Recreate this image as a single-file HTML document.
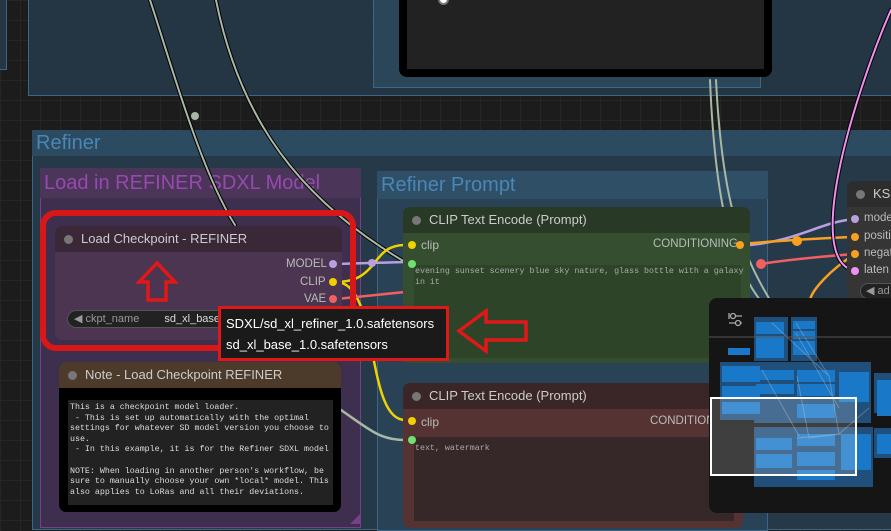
<!DOCTYPE html>
<html><head><meta charset="utf-8"><style>
*{margin:0;padding:0;box-sizing:border-box}
body{width:891px;height:524px;overflow:hidden;position:relative;font-family:"Liberation Sans",sans-serif;
background-color:#1c1c1c;background-image:linear-gradient(#262626 1px,transparent 1px),linear-gradient(90deg,#262626 1px,transparent 1px);background-size:20px 20px}
.a{position:absolute}
.grp{position:absolute;border:1px solid #3d6686}
.gt{font-size:20px;padding-left:4px;line-height:26px}
.node{position:absolute;border-radius:7px;overflow:hidden}
.nt{height:26px;font-size:13px;color:#ccc;line-height:26px;padding-left:26px;position:relative}
.nt:before{content:"";position:absolute;left:9px;top:9px;width:9px;height:9px;border-radius:50%;background:#777}
.dot{position:absolute;width:8px;height:8px;border-radius:50%}
.lbl{position:absolute;font-size:11.5px;color:#bbb}
.mono{font-family:"Liberation Mono",monospace;font-size:8.3px;color:#ddd;line-height:10.6px;white-space:pre}
</style></head><body>
<div class="grp" style="left:-10px;top:-2px;width:17px;height:72px;background:#253541"></div>
<div class="grp" style="left:28px;top:-2px;width:880px;height:98px;background:rgba(38,57,74,0.85)"></div>
<div class="grp" style="left:373px;top:-2px;width:388px;height:90px;background:#2b4559"></div>
<div class="a" style="left:399px;top:-10px;width:373px;height:87px;background:#222;border:8px solid #000;border-radius:8px"></div>
<div class="a" style="left:438px;top:-6px;width:11px;height:11px;border-radius:50%;background:#fff;border:2px solid #777"></div>

<div class="grp" style="left:32px;top:130px;width:870px;height:400px;background:#253949"></div>
<div class="a" style="left:32px;top:130px;width:870px;height:26px;background:#2c4a60"></div>
<div class="a gt" style="left:32px;top:130px;color:#4a86b6">Refiner</div>

<div class="grp" style="left:40px;top:168px;width:321px;height:360px;background:#3d2f4d;border-color:#7a3f8a"></div>
<div class="a" style="left:40px;top:168px;width:321px;height:30px;background:#4b3659"></div>
<div class="a gt" style="left:40px;top:170px;color:#9848b0">Load in REFINER SDXL Model</div>
<div class="a" style="left:350px;top:514px;width:0;height:0;border-left:10px solid transparent;border-bottom:10px solid #7a3f8a"></div>

<div class="grp" style="left:377px;top:171px;width:391px;height:360px;background:#2a4256"></div>
<div class="a" style="left:377px;top:171px;width:391px;height:28px;background:#2f4f66"></div>
<div class="a gt" style="left:377px;top:172px;color:#4a86b6">Refiner Prompt</div>

<svg class="a" style="left:0;top:0" width="891" height="524">
<g fill="none" stroke-linecap="round">
<path d="M150 0 C170 60 200 170 235 225" stroke="#000" stroke-width="4"/>
<path d="M150 0 C170 60 200 170 235 225" stroke="#a8b8a4" stroke-width="2"/>
<path d="M216 0 C240 120 300 200 405 262" stroke="#000" stroke-width="4"/>
<path d="M216 0 C240 120 300 200 405 262" stroke="#a8b8a4" stroke-width="2"/>
<path d="M710 80 C715 200 730 260 760 300" stroke="#a8b8a4" stroke-width="2"/>
<path d="M716 80 C722 200 740 250 770 300" stroke="#a8b8a4" stroke-width="2"/>
<path d="M341 410 C370 430 380 440 405 440" stroke="#a8b8a4" stroke-width="2.5"/>
<path d="M336 264 L405 262" stroke="#b8a0e0" stroke-width="2.5"/>
<path d="M750 245 C800 240 820 222 855 219" stroke="#b8a0e0" stroke-width="2.5"/>
<path d="M336 282 C380 282 370 245 405 245" stroke="#f0d000" stroke-width="2.5"/>
<path d="M336 282 C380 282 365 420 405 420" stroke="#f0d000" stroke-width="2.5"/>
<path d="M336 299 L405 292" stroke="#f06060" stroke-width="2.5"/>
<path d="M740 244 C790 240 820 238 855 237" stroke="#f8a020" stroke-width="2.5"/>
<path d="M760 264 C800 258 830 256 855 254" stroke="#f06060" stroke-width="2.5"/>
<path d="M855 254 C830 270 812 290 810 300" stroke="#f8a020" stroke-width="2.5"/>
<path d="M891 10 C860 80 800 260 855 271" stroke="#000" stroke-width="4"/>
<path d="M891 10 C860 80 800 260 855 271" stroke="#f090f0" stroke-width="2"/>
<circle cx="195" cy="116" r="4" fill="#a8b8a4"/>
<circle cx="797" cy="241" r="5" fill="#f8a020"/>
<circle cx="761" cy="264" r="5" fill="#f06060"/>
<circle cx="372" cy="263" r="4" fill="#b8a0e0"/>
</g></svg>

<div class="node" style="left:55px;top:226px;width:287px;height:114px;background:#4b3550">
<div class="nt" style="background:#3a2838">Load Checkpoint - REFINER</div>
</div>
<div class="lbl" style="left:286px;top:258px">MODEL</div>
<div class="lbl" style="left:300px;top:276px">CLIP</div>
<div class="lbl" style="left:304px;top:293px">VAE</div>
<div class="dot" style="left:329px;top:260px;background:#b8a0e0"></div>
<div class="dot" style="left:329px;top:278px;background:#f0d000"></div>
<div class="dot" style="left:329px;top:295px;background:#f06060"></div>
<div class="a" style="left:67px;top:310px;width:180px;height:18px;border-radius:9px;background:#222;border:1px solid #555;font-size:11px;color:#999;line-height:16px;padding-left:6px">◀ ckpt_name <span style="color:#ddd;margin-left:22px">sd_xl_base_</span></div>
<svg class="a" style="left:136px;top:260px" width="44" height="44"><path d="M21 3 L39 22 L30 22 L30 40 L12 40 L12 22 L3 22 Z" fill="none" stroke="#e01818" stroke-width="3.5"/></svg>
<div class="a" style="left:40px;top:210px;width:316px;height:141px;border:6px solid #d81818;border-radius:16px"></div>

<div class="node" style="left:59px;top:362px;width:282px;height:150px;background:#000">
<div class="nt" style="background:#4c3b2a">Note - Load Checkpoint REFINER</div>
<div class="a mono" style="left:9px;top:38px;width:265px;height:105px;background:#222;padding:3px 2px">This is a checkpoint model loader.
 - This is set up automatically with the optimal
settings for whatever SD model version you choose to
use.
 - In this example, it is for the Refiner SDXL model

NOTE: When loading in another person's workflow, be
sure to manually choose your own *local* model. This
also applies to LoRas and all their deviations.</div>
</div>

<div class="node" style="left:403px;top:207px;width:347px;height:156px;background:#354e30">
<div class="nt" style="background:#283a26">CLIP Text Encode (Prompt)</div>
<div class="a" style="left:11px;top:58px;width:327px;height:93px;background:#2e4429"></div>
<div class="a mono" style="left:12px;top:60px;color:#aaa">evening sunset scenery blue sky nature, glass bottle with a galaxy
in it</div>
</div>
<div class="dot" style="left:408px;top:241px;background:#f0d000"></div>
<div class="lbl" style="left:421px;top:238px;font-size:12px">clip</div>
<div class="lbl" style="left:653px;top:238px">CONDITIONING</div>
<div class="dot" style="left:736px;top:241px;background:#f8a020"></div>
<div class="dot" style="left:408px;top:260px;background:#70e070"></div>

<div class="node" style="left:403px;top:383px;width:340px;height:145px;background:#553332">
<div class="nt" style="background:#3a2626">CLIP Text Encode (Prompt)</div>
<div class="a" style="left:11px;top:54px;width:320px;height:84px;background:#362828"></div>
<div class="a mono" style="left:12px;top:61px;color:#aaa">text, watermark</div>
</div>
<div class="dot" style="left:408px;top:417px;background:#f0d000"></div>
<div class="lbl" style="left:421px;top:415px;font-size:12px">clip</div>
<div class="lbl" style="left:650px;top:415px">CONDITIONING</div>
<div class="dot" style="left:408px;top:436px;background:#70e070"></div>

<div class="node" style="left:847px;top:181px;width:60px;height:120px;background:#353535">
<div class="nt" style="background:#2d2d2d">KSa</div>
</div>
<div class="dot" style="left:851px;top:215px;background:#b8a0e0"></div>
<div class="dot" style="left:851px;top:233px;background:#f8a020"></div>
<div class="dot" style="left:851px;top:250px;background:#f8a020"></div>
<div class="dot" style="left:851px;top:267px;background:#f090f0"></div>
<div class="lbl" style="left:864px;top:212px">model</div>
<div class="lbl" style="left:864px;top:230px">positi</div>
<div class="lbl" style="left:864px;top:247px">negat</div>
<div class="lbl" style="left:864px;top:264px">laten</div>
<div class="a" style="left:860px;top:283px;width:50px;height:16px;border-radius:8px;background:#222;border:1px solid #555;font-size:11px;color:#999;padding-left:5px;line-height:14px">◀ ad</div>

<div class="a" style="left:218px;top:306px;width:231px;height:55px;background:#1a1a1a;border:3px solid #e01818"></div>
<div class="a" style="left:226px;top:316px;font-size:13px;color:#fff">SDXL/sd_xl_refiner_1.0.safetensors</div>
<div class="a" style="left:226px;top:337px;font-size:13px;color:#fff">sd_xl_base_1.0.safetensors</div>
<svg class="a" style="left:456px;top:308px" width="74" height="46"><path d="M3 23 L30 3 L30 14 L70 14 L70 32 L30 32 L30 43 Z" fill="none" stroke="#e01818" stroke-width="3.5"/></svg>

<div class="a" style="left:709px;top:298px;width:190px;height:215px;background:#151515;border-radius:8px;overflow:hidden">
<svg width="190" height="215">
<g fill="#1f4f7a"><rect x="45" y="19" width="34" height="44"/><rect x="82" y="19" width="26" height="44"/><rect x="11" y="64" width="43" height="58"/><rect x="45" y="64" width="117" height="61"/><rect x="45" y="129" width="119" height="60"/><rect x="165" y="75" width="30" height="40"/><rect x="165" y="130" width="30" height="30"/></g>
<g fill="#1a78c8"><rect x="47" y="24" width="28" height="12"/><rect x="47" y="38" width="28" height="22"/><rect x="84" y="23" width="22" height="8"/><rect x="84" y="33" width="22" height="8"/><rect x="84" y="43" width="22" height="14"/><rect x="19" y="50" width="22" height="7"/><rect x="13" y="68" width="38" height="16"/><rect x="13" y="88" width="38" height="12"/><rect x="13" y="104" width="38" height="12"/><rect x="47" y="72" width="38" height="10"/><rect x="47" y="86" width="38" height="10"/><rect x="88" y="72" width="38" height="12"/><rect x="88" y="86" width="38" height="12"/><rect x="130" y="74" width="30" height="30"/><rect x="88" y="106" width="38" height="14"/><rect x="47" y="140" width="36" height="12"/><rect x="47" y="156" width="36" height="14"/><rect x="88" y="136" width="38" height="12"/><rect x="88" y="154" width="38" height="14"/><rect x="88" y="172" width="38" height="10"/><rect x="132" y="136" width="30" height="36"/><rect x="168" y="82" width="24" height="36"/><rect x="168" y="136" width="24" height="20"/></g>
<g stroke="rgba(200,200,200,0.35)" stroke-width="1" fill="none"><path d="M63 25 L120 78 L130 136 L88 140 M87 25 L120 78 M87 35 L130 110 M53 72 L90 138 M88 78 L100 140 L132 136 M160 110 L130 136"/></g>
<line x1="0" y1="39" x2="190" y2="39" stroke="#555" stroke-width="1"/>
<g stroke="#aaa" stroke-width="1.3" fill="none"><circle cx="24" cy="18" r="2.5"/><circle cx="29" cy="25" r="2.5"/><path d="M20 15 V21 M26.5 18 H33 M26.5 25 H20 M31.5 25 H33"/></g>
<rect x="2" y="100" width="145" height="77" fill="rgba(255,255,255,0.18)" stroke="#fff" stroke-width="2"/>
</svg>
</div>
</body></html>
